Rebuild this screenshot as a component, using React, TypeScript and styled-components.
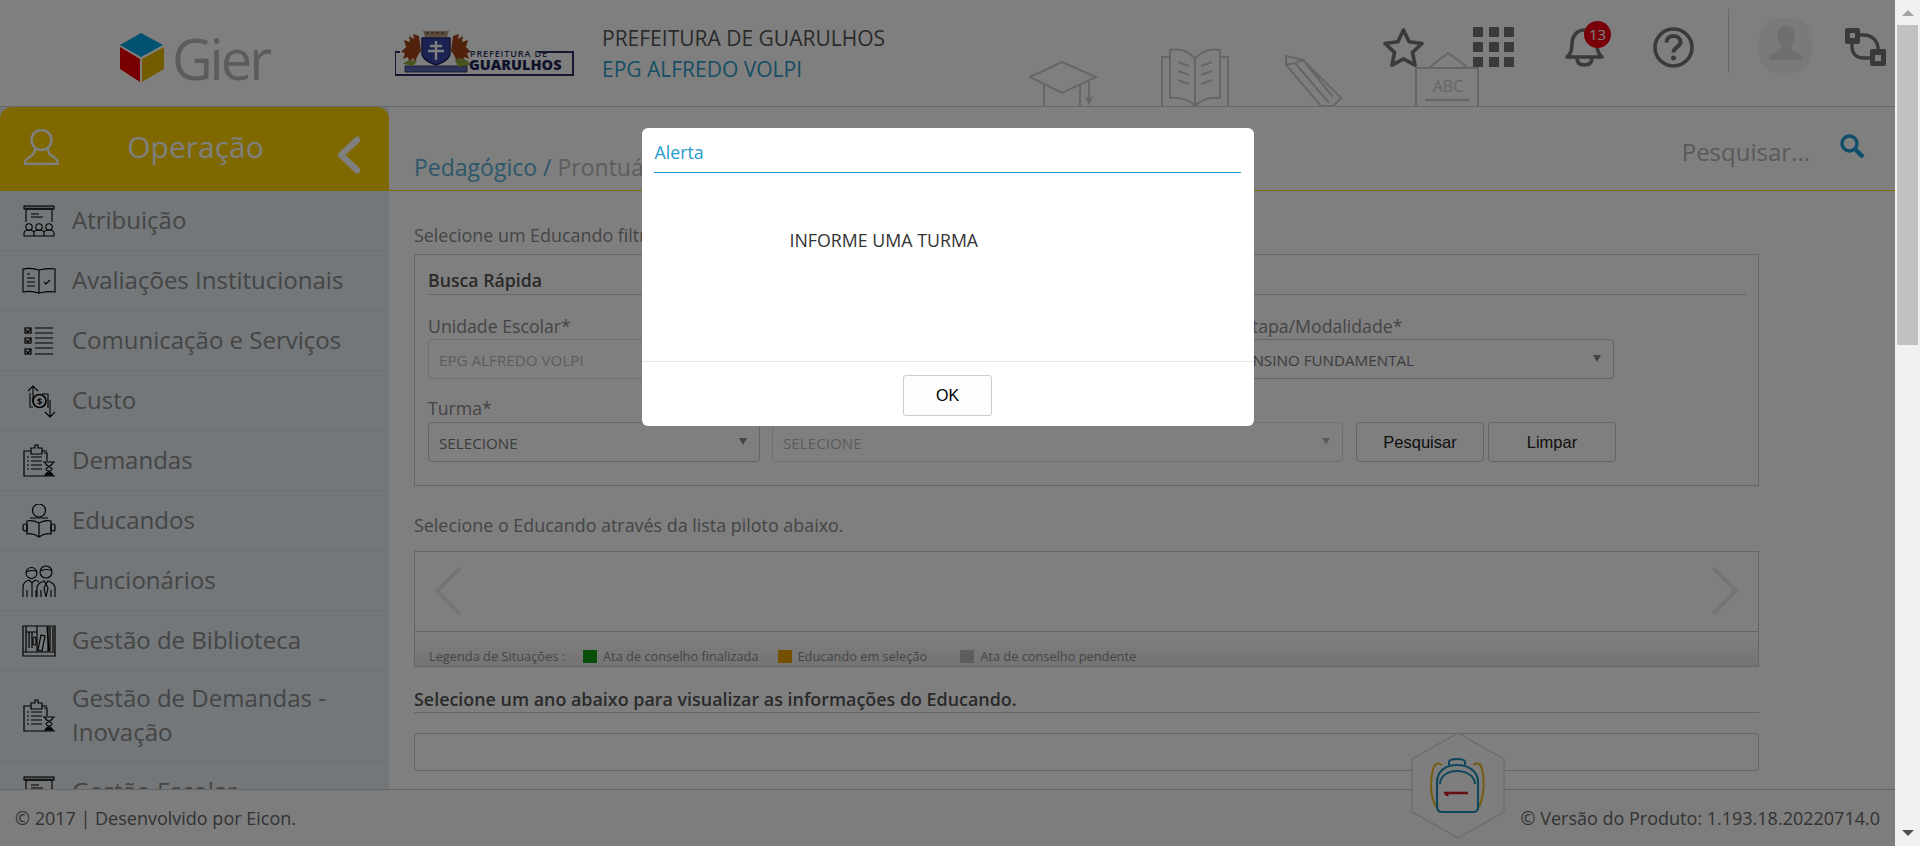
import styled, { createGlobalStyle } from "styled-components";

const GlobalStyle = createGlobalStyle`
  html, body {
    margin: 0;
    height: 100%;
    overflow: hidden;
  }
  body {
    font-family: "Open Sans", "Liberation Sans", sans-serif;
    color: #8a8a8a;
  }
  * {
    box-sizing: border-box;
  }
`;

const MENU = [
  { label: "Atribuição", icon: "board" },
  { label: "Avaliações Institucionais", icon: "book" },
  { label: "Comunicação e Serviços", icon: "list" },
  { label: "Custo", icon: "cost" },
  { label: "Demandas", icon: "clip" },
  { label: "Educandos", icon: "reader" },
  { label: "Funcionários", icon: "staff" },
  { label: "Gestão de Biblioteca", icon: "shelf" },
  { label: "Gestão de Demandas - Inovação", icon: "clip" },
  { label: "Gestão Escolar", icon: "board" },
];

const MenuIcon = ({ name }: { name: string }) => {
  if (name === "board") {
    return (
      <svg width="34" height="34" viewBox="0 0 34 34" fill="none" stroke="#000" strokeWidth="1.1">
        <rect x="2" y="2" width="30" height="3" fill="#000" fillOpacity=".25" />
        <path d="M4 5v13M30 5v13M4 5h26M9 10h8M9 13h12" />
        <circle cx="7" cy="23" r="3.2" />
        <circle cx="17" cy="23" r="3.2" />
        <circle cx="27" cy="23" r="3.2" />
        <path d="M2 32v-3c0-2 2-3 5-3s5 1 5 3v3zM12 32v-3c0-2 2-3 5-3s5 1 5 3v3zM22 32v-3c0-2 2-3 5-3s5 1 5 3v3z" />
      </svg>
    );
  }
  if (name === "book") {
    return (
      <svg width="34" height="34" viewBox="0 0 34 34" fill="none" stroke="#000" strokeWidth="1.1">
        <path d="M1 5c5-1 10-1 16 1v23c-6-2-11-2-16-1zM17 6c5-1 10-2 16-1v23c-5-1-11 0-16 1z" />
        <path d="M5 10h3M5 14h8M5 18h8M5 22h8M22 18l2 2 4-4" />
      </svg>
    );
  }
  if (name === "list") {
    return (
      <svg width="34" height="34" viewBox="0 0 34 34" fill="none" stroke="#000" strokeWidth="1.2">
        <rect x="3" y="4" width="6" height="5" />
        <rect x="3" y="14" width="6" height="5" />
        <rect x="3" y="25" width="6" height="5" />
        <path d="M4 6l2 2 3-4M4 16l2 2 3-4M4 27l2 2 3-4M13 4h18M13 9h18M13 14h18M13 19h18M13 24h18M13 30h18" />
      </svg>
    );
  }
  if (name === "cost") {
    return (
      <svg width="34" height="34" viewBox="0 0 34 34" fill="none" stroke="#000" strokeWidth="1.1">
        <path d="M11 18V2M6 7l5-5 5 5M28 16v17M23 28l5 5 5-5M8 9v14h3M20 10h6v14" />
        <circle cx="17.5" cy="17" r="6.5" strokeWidth="1.6" />
        <text x="17.5" y="20.5" textAnchor="middle" fontSize="9" fontWeight="700" fill="#000" stroke="none">$</text>
      </svg>
    );
  }
  if (name === "clip") {
    return (
      <svg width="34" height="34" viewBox="0 0 34 34" fill="none" stroke="#000" strokeWidth="1.2">
        <path d="M22 9h3v8M21 32H2V7h7V4h4V1h3v3h4v3h5M9 7v3h11V7" />
        <path d="M5 13h2M9 13h11M5 17h2M9 17h11M5 21h2M9 21h11M5 25h2M9 25h11" />
        <path d="M21 18h12M21 32h12M23 18c0 4 7 5 7 7s-7 3-7 7M31 18c0 4-7 5-7 7s7 3 7 7" />
        <path d="M24 31c1-3 5-3 6 0z" fill="#000" />
      </svg>
    );
  }
  if (name === "reader") {
    return (
      <svg width="34" height="34" viewBox="0 0 34 34" fill="none" stroke="#000" strokeWidth="1.2">
        <circle cx="17" cy="6.5" r="6.5" />
        <path d="M8 14h18M5 17c4-1 8 0 12 2 4-2 8-3 12-2v13c-4-1-8 0-12 3-4-3-8-4-12-3zM17 19v14" />
        <rect x="1" y="20" width="4" height="7" rx="2" />
        <rect x="29" y="20" width="4" height="7" rx="2" />
      </svg>
    );
  }
  if (name === "staff") {
    return (
      <svg width="34" height="34" viewBox="0 0 34 34" fill="none" stroke="#000" strokeWidth="1.1">
        <circle cx="9.5" cy="9" r="5.5" />
        <circle cx="24" cy="8" r="6" />
        <path d="M4 8c3-1 8-3 11 0M18 7c3-1 8-3 12 0" />
        <path d="M1 33V23c0-4 3-6 6-7l3 3 3-3c2 .5 3 1 4 2M10 19v14M5 26v7M14 26v7" />
        <path d="M15 33V24c0-4 4-6 7-7l2 3 2-3c3 1 7 3 7 7v9M24 20l-2 4 2 9 2-9zM19 26v7M29 26v7" />
      </svg>
    );
  }
  return (
    <svg width="34" height="34" viewBox="0 0 34 34" fill="none" stroke="#000" strokeWidth="1.2">
      <path d="M1 2h32v26H1zM1 28h32v4H1zM4 2v26M15 2v26M4 8h11M26 2v26" />
      <path d="M7 8v16M10 8v16" />
      <rect x="11" y="13" width="3" height="8" rx="1.5" />
      <path d="M16 26l3-15 4 1-3 15zM25 3l2 24M28 3v24M31 3v24" />
    </svg>
  );
};

const HeaderDecor = () => (
  <svg width="451" height="58" viewBox="0 0 451 58" fill="none" stroke="#cccccc" strokeWidth="2">
    <path d="M33 14l34 15-34 16L1 29zM15 37v21M51 37v21M60 32v18" />
    <path d="M58 50h4l-2 5z" fill="#cccccc" />
    <path d="M133 58V9h8M191 9h8v49" />
    <path d="M141 50V2c9-2 19 1 25 9 6-8 16-11 25-9v48c-10-1-19 2-25 8-6-6-15-9-25-8z" />
    <path d="M166 11v46M149 14l11 4M149 23l11 4M149 32l11 4M183 14l-11 4M183 23l-11 4M183 32l-11 4" />
    <path d="M257 8l17 4 38 38-8 8h-12l-35-41zM257 17l9-2 8-3M266 15l34 40M274 12l30 37" />
    <path d="M387 58V20h62v38M401 19l18-14 19 14" />
    <path d="M396 52h45" strokeWidth="2.5" />
    <text x="419" y="44" textAnchor="middle" fontSize="16" fill="#cccccc" stroke="none" fontFamily="Open Sans">ABC</text>
  </svg>
);

const App = () => (
  <>
    <GlobalStyle />
    <Shell>
      <Page>
        <Header>
          <LogoSlot>
            <svg width="44" height="49" viewBox="0 0 44 49">
              <path d="M21 0l22 12-22 12L0 12z" fill="#00a4e0" />
              <path d="M0 14l20 12v23L0 36z" fill="#f00000" />
              <path d="M22 26l22-12v22L22 49z" fill="#e6b800" />
            </svg>
            <LogoText>Gier</LogoText>
          </LogoSlot>
          <Crest>
            <svg width="180" height="48" viewBox="0 0 180 48" fill="none">
              <path d="M5 22H0v23h178V22h-35" stroke="#263060" strokeWidth="2" />
              <path d="M24 6L18 4l1 5-5-3 1 6-6-2 2 7-5 5 4 1-2 6 5-2 1 5 4-4 2 4 3-7 3-4zM58 6l6-2-1 5 5-3-1 6 6-2-2 7 5 5-4 1 2 6-5-2-1 5-4-4-2 4-3-7-3-4z" fill="#a04418" />
              <path d="M27 8h28v15c0 7-8 10-14 12-6-2-14-5-14-12z" fill="#3a48a8" stroke="#1c2454" strokeWidth="1.500" />
              <path d="M41 11v19M35 16h12M33 21h16" stroke="#fff" strokeWidth="2.400" />
              <path d="M28 1h26l-2 6H30z" fill="#b89a84" />
              <path d="M31 3h20" stroke="#7a4a30" strokeWidth="1.500" strokeDasharray="3 2" />
              <path d="M10 36h62v6H10z" fill="#5b6ab4" stroke="#1c2454" strokeWidth=".8" />
              <path d="M60 30c7-3 12-1 16 5l-13 2zM8 34c3-3 8-5 14-3l-4 5z" fill="#8fa83c" />
              <text x="75" y="27" fontSize="9" letterSpacing=".9" fontWeight="600" fill="#263060" fontFamily="Open Sans">PREFEITURA DE</text>
              <text x="74" y="40" fontSize="14.5" fontWeight="800" fill="#1c2454" fontFamily="Open Sans">GUARULHOS</text>
            </svg>
          </Crest>
          <OrgBlock>
            <OrgName>PREFEITURA DE GUARULHOS</OrgName>
            <SchoolName>EPG ALFREDO VOLPI</SchoolName>
          </OrgBlock>
          <DecorSlot>
            <HeaderDecor />
          </DecorSlot>
          <Actions>
            <StarSlot>
              <svg width="41" height="40" viewBox="0 0 41 40" fill="none" stroke="#747474" strokeWidth="3.600" strokeLinejoin="round">
                <path d="M20.500 2l5.600 11.800 12.900 1.700-9.500 8.900 2.500 12.800-11.500-6.300L9 37.200l2.500-12.800L2 15.500l12.900-1.700z" />
              </svg>
            </StarSlot>
            <AppsGrid $gap={49}>
              {Array.from({ length: 9 }).map((_, i) => (
                <AppsCell key={i} />
              ))}
            </AppsGrid>
            <BellSlot $gap={51}>
              <svg width="39" height="40" viewBox="0 0 39 40" fill="none" stroke="#747474" strokeWidth="3.600" strokeLinejoin="round">
                <path d="M2 30c4-3 5-7 5-13C7 9 12 3 19.500 3S32 9 32 17c0 6 1 10 5 13z" />
                <path d="M12 31c0 5 3 7 7.500 7s7.500-2 7.500-7" />
              </svg>
              <Badge>13</Badge>
            </BellSlot>
            <IconSlot $gap={49}>
              <svg width="41" height="41" viewBox="0 0 41 41" fill="none" stroke="#747474" strokeWidth="3.600">
                <circle cx="20.500" cy="20.500" r="18.500" />
                <path d="M13.500 15.500c0-4 3-6.500 7-6.500s7 2.500 7 6c0 5-7 5-7 10.500" strokeWidth="4" />
                <circle cx="20.500" cy="31" r="2.500" fill="#747474" stroke="none" />
              </svg>
            </IconSlot>
            <Divider />
            <Avatar>
              <svg width="34" height="46" viewBox="0 0 34 46">
                <path d="M17 4c6 0 9 5 8.500 11-.3 4-2 7-3.500 9l1 4c4 2 9 3 11 8v2H0v-2c2-5 7-6 11-8l1-4c-2-2-3.200-5-3.500-9C8 9 11 4 17 4z" fill="#dedede" />
              </svg>
            </Avatar>
            <IconSlot $gap={33}>
              <svg width="41" height="38" viewBox="0 0 41 38" fill="none">
                <rect x="0" y="0" width="15" height="16" rx="2" fill="#747474" />
                <rect x="5" y="5" width="5" height="5" fill="#fff" />
                <path d="M15 7h4c8 0 14 6 14 14M7 16v3c0 7 5 11 11 11h7" stroke="#747474" strokeWidth="3.400" />
                <rect x="25" y="21" width="16" height="17" rx="2" fill="#747474" />
                <rect x="30" y="27" width="6" height="6" fill="#fff" />
              </svg>
            </IconSlot>
          </Actions>
        </Header>

        <Body>
          <Sidebar>
            <SidebarHead>
              <UserGlyph width="37" height="36" viewBox="0 0 37 36" fill="none" stroke="#fff" strokeWidth="2.500">
                <ellipse cx="18.500" cy="11" rx="10" ry="10" />
                <path d="M12 20c0 3-1 5-4 7-4 2-6 4-6 8h33c0-4-2-6-6-8-3-2-4-4-4-7" />
              </UserGlyph>
              <SidebarTitle>Operação</SidebarTitle>
              <CollapseGlyph width="24" height="38" viewBox="0 0 24 38" fill="none" stroke="#fff" strokeWidth="6.500" strokeLinecap="round" strokeLinejoin="round">
                <path d="M20 4L4 19l16 15" />
              </CollapseGlyph>
            </SidebarHead>
            <MenuList>
              {MENU.map((item) => (
                <MenuItem key={item.label}>
                  <MenuGlyph>
                    <MenuIcon name={item.icon} />
                  </MenuGlyph>
                  <MenuLabel>{item.label}</MenuLabel>
                </MenuItem>
              ))}
            </MenuList>
          </Sidebar>

          <Main>
            <TopBar>
              <Breadcrumb>
                <b>Pedagógico /</b> Prontuário do Educando
              </Breadcrumb>
              <SearchBox>
                <SearchHint>Pesquisar...</SearchHint>
                <svg width="25" height="24" viewBox="0 0 25 24" fill="none" stroke="#1f9ad6" strokeWidth="3.400">
                  <circle cx="9.500" cy="9.500" r="7.500" />
                  <path d="M15 15l8 8" strokeWidth="4.500" />
                </svg>
              </SearchBox>
            </TopBar>

            <Content>
              <Intro>Selecione um Educando filtrando pelos campos abaixo.</Intro>
              <FilterPanel>
                <PanelTitle>Busca Rápida</PanelTitle>
                <FieldRow $top={20}>
                  <Field $width={385}>
                    <FieldLabel>Unidade Escolar*</FieldLabel>
                    <Select $disabled $noArrow>EPG ALFREDO VOLPI</Select>
                  </Field>
                  <Field $width={406}>
                    <Select $disabled $noArrow />
                  </Field>
                  <Field $width={381}>
                    <FieldLabel $indent={9}>Etapa/Modalidade*</FieldLabel>
                    <Select>ENSINO FUNDAMENTAL</Select>
                  </Field>
                </FieldRow>
                <FieldRow $top={18} $gap={12}>
                  <Field $width={332}>
                    <FieldLabel $height={25}>Turma*</FieldLabel>
                    <Select>SELECIONE</Select>
                  </Field>
                  <Field $width={571}>
                    <Select $disabled>SELECIONE</Select>
                  </Field>
                  <Buttons>
                    <PlainButton>Pesquisar</PlainButton>
                    <PlainButton>Limpar</PlainButton>
                  </Buttons>
                </FieldRow>
              </FilterPanel>

              <Hint>Selecione o Educando através da lista piloto abaixo.</Hint>
              <Pilot>
                <PilotTrack>
                  <svg width="30" height="50" viewBox="0 0 30 50" fill="none" stroke="#eaeaea" strokeWidth="4" strokeLinecap="round">
                    <path d="M26 3L4 25l22 22" />
                  </svg>
                  <svg width="30" height="50" viewBox="0 0 30 50" fill="none" stroke="#eaeaea" strokeWidth="4" strokeLinecap="round">
                    <path d="M4 3l22 22L4 47" />
                  </svg>
                </PilotTrack>
                <Legend>
                  <LegendTitle>Legenda de Situações :</LegendTitle>
                  <Swatch $color="#109c10" />
                  <LegendText $gap={19}>Ata de conselho finalizada</LegendText>
                  <Swatch $color="#e8a000" />
                  <LegendText $gap={33}>Educando em seleção</LegendText>
                  <Swatch $color="#bbbbbb" />
                  <LegendText>Ata de conselho pendente</LegendText>
                </Legend>
              </Pilot>
              <SectionTitle>Selecione um ano abaixo para visualizar as informações do Educando.</SectionTitle>
              <YearBox />
            </Content>
          </Main>
        </Body>

        <Footer>
          <span>© 2017 | Desenvolvido por Eicon.</span>
          <span>© Versão do Produto: 1.193.18.20220714.0</span>
          <Hexagon>
            <svg width="94" height="107" viewBox="0 0 94 107">
              <path d="M47 1l46 26v53l-46 26L1 80V27z" fill="#fcfcfc" stroke="#dcdcdc" strokeWidth="1.500" />
              <g fill="none" strokeWidth="2">
                <path d="M31 33c-5-3-7-1-9 4-3 12-3 27 3 38M62 33c5-3 8-1 9 4 3 12 2 27-3 38" stroke="#e8b820" />
                <path d="M38 33v-3c0-2 3-3 8-3s8 1 8 3v3" stroke="#1f8fb8" />
                <path d="M26 74V50c0-11 9-17 20-17s21 6 21 17v26c0 2-2 4-4 4H31c-3 0-5-2-5-6z" stroke="#1f8fb8" strokeWidth="2.200" />
                <path d="M29 52c0-8 8-13 17-13s18 5 18 13" stroke="#1f8fb8" />
                <path d="M33 61h24" stroke="#d02030" strokeWidth="2.600" />
                <path d="M36 61v3" stroke="#d02030" strokeWidth="3" />
              </g>
            </svg>
          </Hexagon>
        </Footer>

        <Backdrop>
          <Modal>
            <ModalHead>
              <ModalTitle>Alerta</ModalTitle>
            </ModalHead>
            <ModalBody>INFORME UMA TURMA</ModalBody>
            <ModalFoot>
              <OkButton>OK</OkButton>
            </ModalFoot>
          </Modal>
        </Backdrop>
      </Page>

      <ScrollTrack>
        <ArrowUp />
        <ScrollThumb />
        <ArrowDown />
      </ScrollTrack>
    </Shell>
  </>
);

const Shell = styled.div`
  display: flex;
  width: 100%;
  height: 846px;
  overflow: hidden;
`;

const Page = styled.div`
  position: relative;
  flex: 1;
  min-width: 0;
  display: flex;
  flex-direction: column;
  background: #fff;
`;

const Header = styled.header`
  position: relative;
  flex: none;
  height: 107px;
  display: flex;
  border-bottom: 1px solid #cfcfcf;
`;

const LogoSlot = styled.div`
  width: 389px;
  height: 106px;
  flex: none;
  display: flex;
  justify-content: center;
  align-items: flex-start;
  padding-top: 33px;
  gap: 8px;
`;

const LogoText = styled.span`
  font-size: 56px;
  font-weight: 400;
  line-height: 50px;
  letter-spacing: -3px;
  color: #b8b8b8;
`;

const Crest = styled.div`
  margin: 30px 0 0 6px;
  flex: none;
  height: 48px;
`;

const OrgBlock = styled.div`
  margin: 23px 0 0 27px;
  flex: none;
`;

const OrgName = styled.div`
  font-size: 21px;
  line-height: 31px;
  color: #555;
`;

const SchoolName = styled.div`
  font-size: 21px;
  line-height: 31px;
  color: #2e9cc8;
`;

const DecorSlot = styled.div`
  position: absolute;
  left: 1029px;
  bottom: 0;
  line-height: 0;
`;

const Actions = styled.div`
  position: relative;
  margin-left: auto;
  height: 94px;
  padding-right: 9px;
  display: flex;
  align-items: center;
`;

const IconSlot = styled.div<{ $gap?: number }>`
  margin-left: ${(p) => p.$gap ?? 0}px;
  line-height: 0;
`;

const StarSlot = styled(IconSlot)`
  margin-top: 1px;
`;

const BellSlot = styled(IconSlot)`
  position: relative;
`;

const AppsGrid = styled.div<{ $gap: number }>`
  margin-left: ${(p) => p.$gap}px;
  display: grid;
  grid-template-columns: repeat(3, 10px);
  grid-auto-rows: 10px;
  gap: 5.300px;
`;

const AppsCell = styled.span`
  background: #747474;
`;

const Badge = styled.span`
  position: absolute;
  left: 19px;
  top: -6px;
  width: 27px;
  height: 27px;
  border-radius: 50%;
  background: #f00010;
  color: #fff;
  font-size: 15px;
  line-height: 27px;
  text-align: center;
`;

const Divider = styled.div`
  width: 1px;
  height: 64px;
  margin: 0 0 12px 34px;
  background: #cfcfcf;
`;

const Avatar = styled.div`
  width: 53px;
  height: 55px;
  margin: 0 0 3px 30px;
  border-radius: 20px;
  background: #f4f4f4;
  display: flex;
  justify-content: center;
  align-items: flex-end;
  padding-bottom: 5px;
`;

const Body = styled.div`
  flex: 1;
  min-height: 0;
  display: flex;
  overflow: hidden;
`;

const Sidebar = styled.aside`
  width: 389px;
  flex: none;
  display: flex;
  flex-direction: column;
  background: #e8eef2;
`;

const SidebarHead = styled.div`
  height: 84px;
  flex: none;
  display: flex;
  align-items: center;
  justify-content: space-between;
  padding: 0 28px 0 23px;
  background: #ffd000;
  border-radius: 12px 12px 0 0;
`;

const UserGlyph = styled.svg`
  margin-bottom: 5px;
`;

const CollapseGlyph = styled.svg`
  margin-top: 12px;
`;

const SidebarTitle = styled.span`
  margin: 0 6px 6px 0;
  font-size: 30px;
  color: #fff;
`;

const MenuList = styled.nav`
  display: flex;
  flex-direction: column;
`;

const MenuItem = styled.div`
  flex: none;
  min-height: 60px;
  display: flex;
  align-items: center;
  padding: 10px 20px 12px 22px;
  border-bottom: 1px solid #dde3e7;
`;

const MenuGlyph = styled.span`
  width: 50px;
  flex: none;
  line-height: 0;
  margin-top: 2px;
`;

const MenuLabel = styled.span`
  font-size: 24px;
  line-height: 34px;
  color: #8a8a8a;
`;

const Main = styled.main`
  flex: 1;
  min-width: 0;
  display: flex;
  flex-direction: column;
`;

const TopBar = styled.div`
  height: 84px;
  flex: none;
  display: flex;
  justify-content: space-between;
  border-bottom: 1px solid #ffd000;
  padding: 0 30px 0 25px;
`;

const Breadcrumb = styled.div`
  margin-top: 44px;
  font-size: 23px;
  line-height: 32px;
  color: #bbb;
  b {
    font-weight: 400;
    color: #5ab0d4;
  }
`;

const SearchBox = styled.div`
  display: flex;
  align-items: flex-start;
  gap: 30px;
  padding-top: 27px;
`;

const SearchHint = styled.span`
  font-size: 24px;
  line-height: 36px;
  color: #b4b4b4;
`;

const Content = styled.div`
  padding: 33px 136px 0 25px;
`;

const Intro = styled.p`
  margin: 0 0 8px;
  font-size: 17.900px;
  line-height: 22px;
  white-space: nowrap;
`;

const FilterPanel = styled.section`
  height: 232px;
  border: 1px solid #cccccc;
  padding: 15px 12px 0 13px;
`;

const PanelTitle = styled.h3`
  margin: 0;
  height: 25px;
  border-bottom: 1px solid #cccccc;
  font-size: 17.700px;
  font-weight: 600;
  line-height: 21px;
  color: #555;
`;

const FieldRow = styled.div<{ $top: number; $gap?: number }>`
  display: flex;
  align-items: flex-end;
  gap: ${(p) => p.$gap ?? 7}px;
  margin-top: ${(p) => p.$top}px;
`;

const Field = styled.div<{ $width: number }>`
  width: ${(p) => p.$width}px;
  flex: none;
`;

const FieldLabel = styled.div<{ $height?: number; $indent?: number }>`
  height: ${(p) => p.$height ?? 24}px;
  padding-left: ${(p) => p.$indent ?? 0}px;
  font-size: 17.700px;
  line-height: 23px;
  color: #8a8a8a;
`;

const Select = styled.div<{ $disabled?: boolean; $noArrow?: boolean }>`
  position: relative;
  height: 40px;
  padding-left: 10px;
  border: 1px solid ${(p) => (p.$disabled ? "#dedede" : "#c8c8c8")};
  border-radius: 4px;
  font-size: 15.200px;
  line-height: 40px;
  color: ${(p) => (p.$disabled ? "#b8b8b8" : "#777")};
  &::after {
    content: "";
    position: absolute;
    right: 12px;
    top: 15px;
    border-style: solid;
    border-width: 7px 4px 0;
    border-color: ${(p) => (p.$disabled ? "#bbb" : "#888")} transparent transparent;
    display: ${(p) => (p.$noArrow ? "none" : "block")};
  }
`;

const Buttons = styled.div`
  display: flex;
  gap: 4px;
  margin-left: 1px;
`;

const PlainButton = styled.button`
  width: 128px;
  height: 40px;
  padding: 0;
  border: 1px solid #c8c8c8;
  border-radius: 4px;
  background: #fff;
  font-family: "Liberation Sans", sans-serif;
  font-size: 16.500px;
  color: #222;
`;

const Hint = styled.p`
  margin: 28px 0 14px;
  font-size: 17.900px;
  line-height: 23px;
`;

const Pilot = styled.section`
  height: 116px;
  border: 1px solid #cccccc;
  display: flex;
  flex-direction: column;
`;

const PilotTrack = styled.div`
  height: 79px;
  flex: none;
  display: flex;
  justify-content: space-between;
  align-items: flex-start;
  padding: 14px 18px 0 18px;
`;

const Legend = styled.div`
  flex: 1;
  display: flex;
  align-items: flex-end;
  padding: 0 14px 0;
  border-top: 1px solid #cccccc;
  background: linear-gradient(#fff, #e8e8e8);
`;

const LegendTitle = styled.span`
  width: 154px;
  font-size: 12.800px;
  line-height: 20px;
`;

const Swatch = styled.span<{ $color: string }>`
  width: 14px;
  height: 13px;
  margin: 0 6px 3px 0;
  background: ${(p) => p.$color};
`;

const LegendText = styled.span<{ $gap?: number }>`
  margin-right: ${(p) => p.$gap ?? 0}px;
  font-size: 12.800px;
  line-height: 20px;
`;

const SectionTitle = styled.h3`
  margin: 21px 0 0;
  height: 25px;
  border-bottom: 1px solid #cccccc;
  font-size: 17.900px;
  font-weight: 600;
  line-height: 23px;
  color: #555;
  white-space: nowrap;
`;

const YearBox = styled.div`
  height: 38px;
  margin-top: 20px;
  border: 1px solid #cccccc;
  border-radius: 4px;
`;

const Footer = styled.footer`
  position: relative;
  flex: none;
  height: 57px;
  display: flex;
  justify-content: space-between;
  align-items: center;
  padding: 0 15px;
  border-top: 1px solid #cccccc;
  background: #fafafa;
  font-size: 18px;
  color: #666;
`;

const Hexagon = styled.div`
  position: absolute;
  right: 390px;
  bottom: 7px;
  line-height: 0;
`;

const Backdrop = styled.div`
  position: absolute;
  inset: 0;
  display: flex;
  justify-content: center;
  align-items: flex-start;
  padding-top: 128px;
  background: rgba(0, 0, 0, 0.5);
`;

const Modal = styled.div`
  width: 612px;
  height: 298px;
  display: flex;
  flex-direction: column;
  border-radius: 6px;
  background: #fff;
`;

const ModalHead = styled.div`
  height: 45px;
  margin: 0 13px 0 12px;
  border-bottom: 1px solid #1a9ad0;
`;

const ModalTitle = styled.span`
  padding-left: 1px;
  font-size: 17.800px;
  line-height: 49px;
  color: #2a9bcc;
`;

const ModalBody = styled.div`
  flex: 1;
  padding: 56px 0 0 148px;
  font-size: 17.800px;
  line-height: 22px;
  color: #333;
`;

const ModalFoot = styled.div`
  height: 65px;
  flex: none;
  display: flex;
  justify-content: center;
  padding-top: 13px;
  border-top: 1px solid #e5e5e5;
`;

const OkButton = styled.button`
  width: 89px;
  height: 41px;
  padding: 0;
  border: 1px solid #ccc;
  border-radius: 3px;
  background: #fdfdfd;
  font-family: "Liberation Sans", sans-serif;
  font-size: 16px;
  color: #000;
`;

const ScrollTrack = styled.div`
  position: relative;
  width: 25px;
  flex: none;
  background: #f1f1f1;
  padding-top: 25px;
`;

const ScrollThumb = styled.div`
  width: 21px;
  height: 320px;
  margin-left: 2px;
  background: #c1c1c1;
`;

const ArrowUp = styled.span`
  position: absolute;
  top: 10px;
  left: 7px;
  border-style: solid;
  border-width: 0 6px 6px;
  border-color: transparent transparent #a3a3a3;
`;

const ArrowDown = styled.span`
  position: absolute;
  bottom: 10px;
  left: 7px;
  border-style: solid;
  border-width: 6px 6px 0;
  border-color: #505050 transparent transparent;
`;

export default App;
